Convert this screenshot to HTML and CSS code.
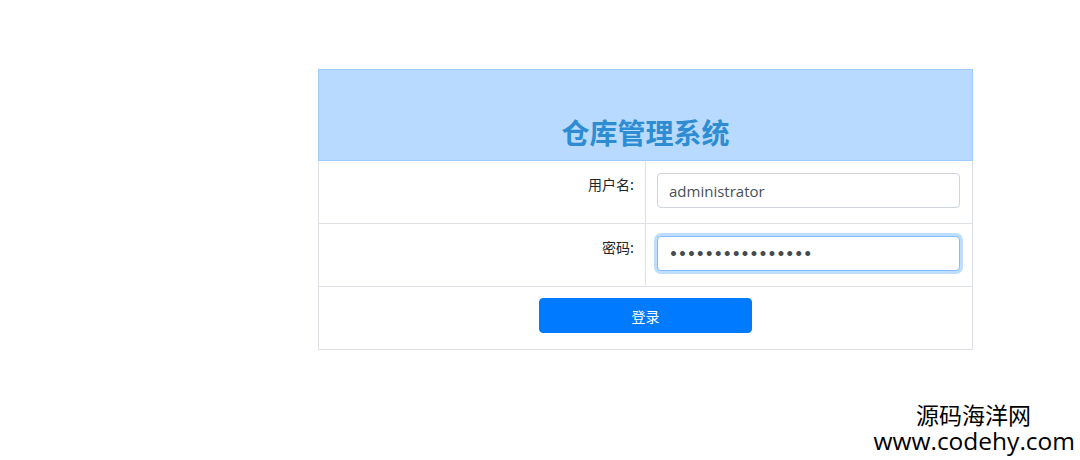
FILE: index.html
```html
<!DOCTYPE html>
<html lang="zh-CN">
<head>
  <meta charset="UTF-8">
  <title>仓库管理系统</title>
  <link rel="stylesheet" href="styles.css">
</head>
<body>
<div class="page">
  <form class="login">
    <table class="login-table">
      <tr class="head-row">
        <th colspan="2"><h2>仓库管理系统</h2></th>
      </tr>
      <tr>
        <td class="label">用户名:</td>
        <td class="field"><input class="input" type="text" value="administrator"></td>
      </tr>
      <tr>
        <td class="label">密码:</td>
        <td class="field"><input class="input pass focused" type="password" value="aaaaaaaaaaaaaaaa"></td>
      </tr>
      <tr>
        <td colspan="2" class="actions"><button type="button" class="btn">登录</button></td>
      </tr>
    </table>
  </form>
</div>
<div class="mark">
  <div class="mark-cn">源码海洋网</div>
  <div class="mark-url">www.codehy.com</div>
</div>
</body>
</html>
```

FILE: styles.css
```css
body {
  margin: 0;
  font-family: "Open Sans", "Noto Sans CJK SC", sans-serif;
  color: #212529;
  background: #fff;
}
.page {
  padding: 69px 0 0 318px;
}
.login-table {
  width: 655px;
  border-collapse: collapse;
  border: 1px solid #dee2e6;
}
.head-row th {
  background: #b8daff;
  border: 1px solid #9fcdff;
  height: 90px;
  padding: 0;
  vertical-align: bottom;
}
.head-row h2 {
  margin: 0 0 9px;
  font-family: "Noto Sans CJK SC", sans-serif;
  font-size: 28px;
  font-weight: 700;
  color: #2e8cd3;
  line-height: 38px;
}
td {
  border-top: 1px solid #dee2e6;
  height: 63px;
  padding: 0 11px;
  box-sizing: border-box;
  vertical-align: top;
}
td.label {
  width: 50%;
  text-align: right;
  padding-top: 13px;
  font-size: 14px;
  font-family: "Noto Sans CJK SC", sans-serif;
  border-right: 1px solid #dee2e6;
}
td.field {
  padding-top: 12px;
  padding-right: 12px;
}
.input {
  display: block;
  width: 100%;
  height: 35px;
  box-sizing: border-box;
  padding: 0 11px;
  border: 1px solid #ced4da;
  border-radius: 4px;
  font-family: "Open Sans", sans-serif;
  font-size: 15px;
  color: #495057;
  outline: none;
}
.input.pass {
  font-family: "DejaVu Sans", sans-serif;
  font-weight: 700;
  font-size: 14px;
  color: #454a50;
}
.input.focused {
  border-color: #80bdff;
  box-shadow: 0 0 0 3px rgba(0, 123, 255, 0.25);
}
.actions {
  text-align: center;
  padding-top: 11px;
}
.btn {
  width: 213px;
  height: 35px;
  background: #007bff;
  color: #fff;
  border: 1px solid #007bff;
  border-radius: 4px;
  font-family: "Noto Sans CJK SC", sans-serif;
  font-size: 14px;
}
.mark {
  position: absolute;
  right: 5px;
  top: 401px;
  text-align: right;
  color: #000;
}
.mark-cn {
  font-family: "Noto Sans CJK SC", sans-serif;
  font-size: 23px;
  line-height: 26px;
  padding-right: 44px;
}
.mark-url {
  font-family: "Open Sans", sans-serif;
  font-size: 24.5px;
  line-height: 27px;
}
```
